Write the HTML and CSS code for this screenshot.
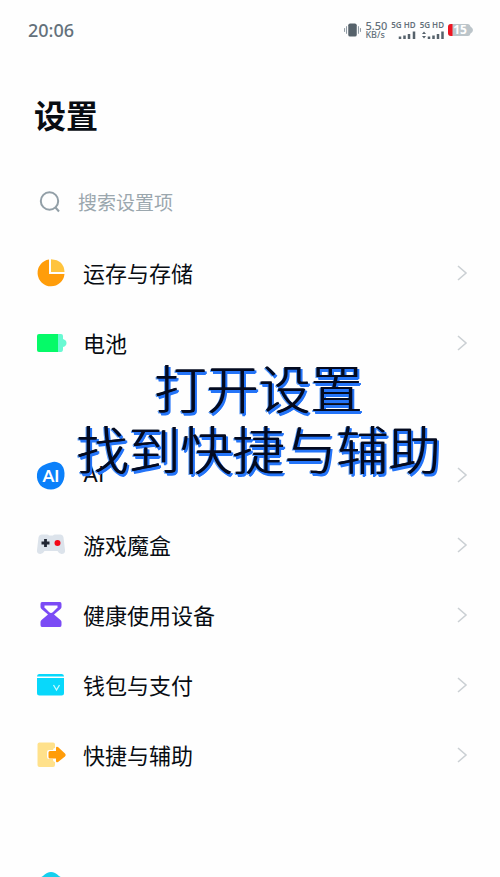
FILE: index.html
```html
<!DOCTYPE html>
<html lang="zh-CN">
<head>
<meta charset="utf-8">
<meta name="viewport" content="width=device-width, initial-scale=1">
<title>设置</title>
<link rel="stylesheet" href="styles.css">
</head>
<body>
<svg class="defs" aria-hidden="true"><symbol id="chevron" viewBox="0 0 12 18"><path d="M2 2l8 7-8 7" fill="none" stroke="currentColor" stroke-width="1.600"/></symbol></svg>
<div class="screen">
  <header class="status">
    <time class="clock">20:06</time>
    <div class="indicators">
      <svg width="17" height="16" viewBox="0 0 18 16" aria-hidden="true"><rect x="4.500" y="1" width="9" height="14" rx="2" fill="#56626b"/><path d="M2.700 4v8M15.300 4v8M.6 6v4M17.400 6v4" stroke="#84909a" stroke-width="1"/></svg>
      <div class="speed"><span class="rate">5.50</span><span class="unit">KB/s</span></div>
      <div class="signal"><span>5G HD</span>
        <svg width="18" height="8" viewBox="0 0 18 8" aria-hidden="true"><path d="M2 8V5.500M6.500 8V4.500M11 8V3M16 8V.5" stroke="#56626b" stroke-width="2.500"/></svg></div>
      <div class="signal"><span>5G HD</span>
        <svg width="22" height="8" viewBox="0 0 22 8" aria-hidden="true"><path d="M0 3l2-2.500L4 3zM0 5l2 2.500L4 5z" fill="#56626b"/><path d="M7 8V5.500M11.500 8V4.500M16 8V3M20.500 8V.5" stroke="#56626b" stroke-width="2.500"/></svg></div>
      <div class="battery">
        <svg width="25" height="14" viewBox="0 0 25 14" aria-hidden="true"><path d="M3 1h17q2 0 2.500 2.500Q25 5 25 7t-2.500 3.500Q22 13 20 13H3q-3 0-3-3V4q0-3 3-3z" fill="#bcc5ca"/><path d="M4.500 1H3Q0 1 0 4v6q0 3 3 3h1.500z" fill="#ef1521"/></svg>
        <span class="charge">15</span>
      </div>
    </div>
  </header>
  <main>
    <h1>设置</h1>
    <label class="search">
      <svg width="22" height="22" viewBox="0 0 22 22" aria-hidden="true"><circle cx="10.500" cy="10" r="8.700" fill="none" stroke="#929fa7" stroke-width="2"/><path d="M16.500 16.500l3.500 4" stroke="#929fa7" stroke-width="2"/></svg>
      <input type="search" placeholder="搜索设置项" aria-label="搜索设置项">
    </label>
    <nav>
      <ul>
        <li><a href="#storage">
          <svg class="icon" viewBox="0 0 30 30" aria-hidden="true"><path d="M13 1.500A13.500 13.500 0 1 0 28.500 16H13z" fill="#ff9d0a"/><path d="M15 1.200Q28 2 28.500 14H15z" fill="#ffc43d"/></svg>
          <span>运存与存储</span><svg class="chevron"><use href="#chevron"/></svg></a></li>
        <li><a href="#battery">
          <svg class="icon" viewBox="0 0 30 30" aria-hidden="true"><path d="M21 6h4q2 0 2 2v3q3.500 1 3.500 4T27 19v2q0 3-2 3h-4z" fill="#69f9d2"/><path d="M3 6h19v18H3q-2 0-2-2V8q0-2 2-2z" fill="#05fa68"/></svg>
          <span>电池</span><svg class="chevron"><use href="#chevron"/></svg></a></li>
      </ul>
      <ul>
        <li><a href="#ai">
          <svg class="icon" viewBox="0 0 30 30" aria-hidden="true"><path d="M15 2.500C20 .5 28 3 28.500 13C29 23 23 29.500 15 29.500C6 29.500 0 23 1 14C2 6 10 4 15 2.500z" fill="#0b80fa"/><text class="ai-mark" x="15" y="22" text-anchor="middle">AI</text></svg>
          <span class="latin">AI</span><svg class="chevron"><use href="#chevron"/></svg></a></li>
        <li><a href="#games">
          <svg class="icon" viewBox="0 0 30 30" aria-hidden="true"><path d="M6 4.500h5q1.500 0 2 1h4q.5-1 2-1h5q3 0 3.500 3L29 20q.5 4-3.500 4-2.500 0-4-3h-13q-1.500 3-4 3Q.5 24 1 20L2.500 7.500q.5-3 3.500-3z" fill="#dce3eb"/><path d="M9.500 9v8M5.500 13h8" stroke="#202633" stroke-width="2.800"/><circle cx="21.500" cy="13" r="3" fill="#f40818"/></svg>
          <span>游戏魔盒</span><svg class="chevron"><use href="#chevron"/></svg></a></li>
        <li><a href="#health">
          <svg class="icon" viewBox="-1 -1 30 30" aria-hidden="true"><path d="M5 1h18q1.500 0 1.500 2v3q0 1-1 2L17 13.500l6.500 5.500q1 1 1 2v3q0 2-1.500 2H5q-1.500 0-1.500-2v-3q0-1 1-2l6.500-5.500L4.500 8q-1-1-1-2V3q0-2 1.500-2z" fill="#7b4bf5"/><path d="M7.500 4.500h13v2L16 11q-2 2-4 0L7.500 6.500z" fill="#fff"/></svg>
          <span>健康使用设备</span><svg class="chevron"><use href="#chevron"/></svg></a></li>
        <li><a href="#wallet">
          <svg class="icon" viewBox="0 0 30 30" aria-hidden="true"><path d="M3 4h23q2 0 2 2.500H1Q1 4 3 4zM1 8h27v15q0 2.500-2.500 2.500h-22Q1 25.500 1 23z" fill="#08d8fb"/><path d="M17.500 15l3 5 3-5" fill="none" stroke="#c6faff" stroke-width="1.300"/></svg>
          <span>钱包与支付</span><svg class="chevron"><use href="#chevron"/></svg></a></li>
        <li><a href="#shortcuts">
          <svg class="icon" viewBox="0 0 30 30" aria-hidden="true"><path d="M3.500 2.500H17q2 0 2 2V8q-2 0-2 2h-4q-2 0-2 2v5q0 2 2 2h4q0 3 2 3v3q0 2-2 2H3.500q-2 0-2-2v-20.500q0-2 2-2z" fill="#ffe18b"/><path d="M14 11h6V8q0-2 2-1l7 6.500q1.500 1.500 0 3L22 22q-2 1-2-1v-2.500h-6q-1.500 0-1.500-1.500v-4.500q0-1.500 1.500-1.500z" fill="#ff9c09"/></svg>
          <span>快捷与辅助</span><svg class="chevron"><use href="#chevron"/></svg></a></li>
      </ul>
      <ul class="fading">
        <li><a href="#security">
          <svg class="icon" viewBox="0 0 30 30" aria-hidden="true"><path d="M15 0q4 0 8 4l5 3v12q-3 9-13 11Q4 28 2 19V7l5-3q4-4 8-4z" fill="#15d0ee"/></svg>
          <span>安全与隐私保护</span></a></li>
      </ul>
    </nav>
  </main>
  <p class="caption">打开设置<br>找到快捷与辅助</p>
</div>
</body>
</html>
```
FILE: styles.css
```css
* { box-sizing: border-box; }
body {
  margin: 0;
  background: #fefefe;
  color: #080c12;
  font-family: "Noto Sans CJK SC", sans-serif;
}
.defs { position: absolute; width: 0; height: 0; }
.screen {
  position: relative;
  height: 100vh;
  overflow: hidden;
}
.status {
  display: flex;
  align-items: center;
  justify-content: space-between;
  height: 60px;
  padding: 0 27px 0 28px;
  color: #64717b;
  font-family: "Noto Sans", sans-serif;
}
.clock { font-size: 18px; font-weight: 500; }
.indicators { display: flex; align-items: center; gap: 4px; }
.speed, .signal { display: flex; flex-direction: column; }
.speed { font-size: 11px; line-height: 9px; font-weight: 500; }
.speed .unit { font-size: 9px; }
.signal {
  align-items: flex-end;
  gap: 2px;
  font-size: 8px;
  line-height: 8px;
  font-weight: 600;
}
.battery { display: grid; align-items: center; }
.battery > * { grid-area: 1 / 1; }
.charge {
  padding-right: 1px;
  color: #fff;
  font-size: 12px;
  font-weight: 700;
  line-height: 14px;
  text-align: center;
}
h1 {
  margin: 30px 34px 0;
  font-size: 32px;
  line-height: 48px;
  font-weight: 700;
}
.search {
  display: flex;
  align-items: center;
  gap: 17px;
  height: 72px;
  margin: 28px 39px 0;
}
.search input {
  flex: 1;
  min-width: 0;
  padding: 0 0 2px;
  border: 0;
  outline: 0;
  background: none;
  color: #080c12;
  font: inherit;
  font-size: 19px;
}
.search input::placeholder { color: #9ba7ae; opacity: 1; }
ul { margin: 0 0 62px; padding: 0; list-style: none; }
li a {
  display: flex;
  align-items: center;
  height: 70px;
  padding: 0 32px 0 36px;
  color: inherit;
  font-size: 22px;
  font-weight: 400;
  line-height: 32px;
  text-decoration: none;
}
li span { flex: 1; padding-bottom: 2px; }
.icon { width: 30px; height: 30px; margin-right: 17px; overflow: visible; }
.chevron { width: 12px; height: 18px; color: #cbd0d4; }
.ai-mark { fill: #fff; font: 700 17px Lato, sans-serif; }
.latin { font-family: Inter, sans-serif; }
.fading span { color: #f5f5f6; }
.caption {
  position: absolute;
  top: 356px;
  left: 0;
  right: 0;
  margin: 0;
  padding-left: 16px;
  color: #030a20;
  font-size: 52px;
  font-weight: 300;
  line-height: 61px;
  text-align: center;
  text-shadow: 1px 0 #030a20, 2px 2px #2474f8, 3px 2px #2474f8, 2px 3px #2474f8, -1px 1px #5b9cfa;
  pointer-events: none;
}
```
